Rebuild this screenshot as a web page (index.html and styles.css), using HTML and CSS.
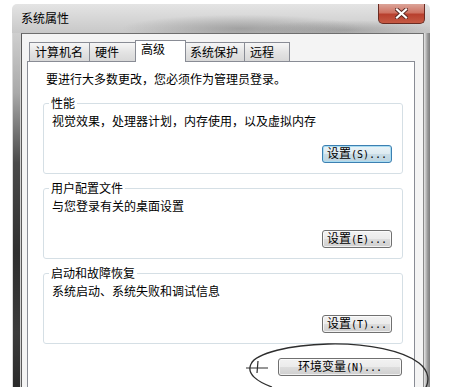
FILE: index.html
```html
<!DOCTYPE html>
<html lang="zh-CN">
<head>
  <meta charset="UTF-8" />
  <meta name="viewport" content="width=device-width, initial-scale=1.0" />
  <title>系统属性</title>
  <link rel="stylesheet" href="styles.css">
</head>
<body>

  <!-- System properties dialog -->
  <div class="window">
    <div class="titlebar">
      <span class="title">系统属性</span>
      <button class="close-btn" aria-label="关闭">
        <svg width="13" height="11" viewBox="0 0 13 11">
          <path d="M2 1.5 L11 9.5 M11 1.5 L2 9.5" stroke="#5a2a24" stroke-width="4" stroke-linecap="square" />
          <path d="M2 1.5 L11 9.5 M11 1.5 L2 9.5" stroke="#fff" stroke-width="2.2" stroke-linecap="square" />
        </svg>
      </button>
    </div>

    <div class="frame">
      <div class="frame-left"></div>

      <div class="client">
        <div class="tabs">
          <div class="tab tab-name">计算机名</div>
          <div class="tab tab-hw">硬件</div>
          <div class="tab tab-adv active">高级</div>
          <div class="tab tab-prot">系统保护</div>
          <div class="tab tab-remote">远程</div>
        </div>

        <div class="panel">
          <p class="intro">要进行大多数更改，您必须作为管理员登录。</p>

          <fieldset class="group first">
            <legend>性能</legend>
            <p class="desc">视觉效果，处理器计划，内存使用，以及虚拟内存</p>
            <div class="actions">
              <button class="btn focused">设置<span class="hotkey">(S)...</span></button>
            </div>
          </fieldset>

          <fieldset class="group">
            <legend>用户配置文件</legend>
            <p class="desc">与您登录有关的桌面设置</p>
            <div class="actions">
              <button class="btn">设置<span class="hotkey">(E)...</span></button>
            </div>
          </fieldset>

          <fieldset class="group">
            <legend>启动和故障恢复</legend>
            <p class="desc">系统启动、系统失败和调试信息</p>
            <div class="actions">
              <button class="btn">设置<span class="hotkey">(T)...</span></button>
            </div>
          </fieldset>

          <div class="actions env">
            <button class="btn wide">环境变量<span class="hotkey">(N)...</span></button>
          </div>
        </div>
      </div>

      <div class="frame-right"></div>
    </div>
  </div>

  <!-- hand-drawn circle around the env button -->
  <svg class="annotation" width="469" height="387" viewBox="0 0 469 387">
    <path d="M272 387 C258 382 246 374 251 364 C256 353 290 345 328 344 C368 343 404 351 419 363 C429 371 430 381 425 389"
          fill="none" stroke="#2e2e2e" stroke-width="1.3" />
    <path d="M246 368 L268 368 M258 361 L257 373" fill="none" stroke="#2e2e2e" stroke-width="1.2" />
  </svg>

</body>
</html>
```

FILE: styles.css
```css
body {
  margin: 0;
  height: 387px;
  background: #fff;
  font-family: 'Noto Sans CJK SC', sans-serif;
  font-size: 12px;
  line-height: 14px;
  color: #000;
  overflow: hidden;
  position: relative;
}

p {
  margin: 0;
}

.window {
  margin: 4px 0 0 12px;
  width: 418px;
  height: 383px;
  display: flex;
  flex-direction: column;
  border-radius: 5px 5px 0 0;
  overflow: hidden;
}

.titlebar {
  height: 29px;
  display: flex;
  align-items: flex-start;
  padding-left: 9px;
  background:
    radial-gradient(ellipse 120px 14px at 55% 85%, rgba(80, 80, 80, 0.35), transparent),
    radial-gradient(ellipse 90px 10px at 80% 90%, rgba(80, 80, 80, 0.3), transparent),
    linear-gradient(to bottom, #e4e4e4, #c8c8c8);
}

.title {
  margin-top: 7px;
}

.close-btn {
  margin-left: auto;
  margin-right: 5px;
  width: 47px;
  height: 20px;
  padding: 0;
  border: 1px solid #6a2b22;
  border-top: none;
  border-radius: 0 0 5px 5px;
  background: linear-gradient(to bottom, #dba499 0%, #cf7464 45%, #b8402e 55%, #c65a44 100%);
  display: flex;
  justify-content: center;
  align-items: center;
}

.frame {
  flex: 1;
  display: flex;
}

.frame-left {
  width: 7px;
  background: linear-gradient(to bottom, #cfcfcf 0, #a9a9a9 60px, #4a4a4a 130px, #2f2f2f 220px, #3b3b3b 300px, #2a2a2a 100%);
  border-left: 1px solid #d8d8d8;
  border-right: 1px solid #d0d0d0;
}

.frame-right {
  width: 6px;
  background: linear-gradient(to right, #e6e6e6, #9a9a9a 60%, #7d7d7d);
}

.client {
  flex: 1;
  display: flex;
  flex-direction: column;
  background: #f4f4f4;
  border-top: 1px solid #6e6e6e;
  border-left: 1px solid #5a5a5a;
  border-right: 1px solid #8a8a8a;
  padding: 6px 8px 0 5px;
}

/* tab strip */
.tabs {
  display: flex;
  align-items: flex-end;
  margin-left: 2px;
}

.tab {
  height: 19px;
  box-sizing: border-box;
  border: 1px solid #898c95;
  border-bottom: none;
  border-right: none;
  padding-left: 5px;
  line-height: 17px;
  background: linear-gradient(to bottom, #f6f6f6, #e4e4e4 50%, #d8d8d8);
}

.tab-name   { width: 60px; }
.tab-hw     { width: 46px; }
.tab-adv    { width: 51px; }
.tab-prot   { width: 58px; padding-left: 4px; }
.tab-remote { width: 46px; border-right: 1px solid #898c95; }

.tab-hw { border-right: none; }

.tab.active {
  height: 22px;
  margin-bottom: -1px;
  border-right: 1px solid #898c95;
  background: #fff;
  line-height: 16px;
  position: relative;
  z-index: 1;
}

.tab.active + .tab {
  border-left: none;
}

.panel {
  flex: 1;
  background: #fff;
  border: 1px solid #898c95;
  border-bottom: none;
  padding: 10px 11px 0 15px;
}

.intro {
  margin-left: 3px;
}

.group {
  margin: 7px 0 0;
  min-width: 0;
  padding: 4px 10px 10px 8px;
  border: 1px solid #d5dfe5;
  border-radius: 3px;
}

.group.first {
  margin-top: 10px;
}

.group legend {
  padding: 0 2px;
  margin-left: -3px;
}

.actions {
  display: flex;
  justify-content: flex-end;
  margin-top: 17px;
}

.actions.env {
  margin-top: 14px;
  margin-right: 1px;
}

/* Win7 style push buttons */
.btn {
  width: 70px;
  height: 18px;
  padding: 0;
  font-family: 'Noto Sans CJK SC', sans-serif;
  font-size: 12px;
  line-height: 14px;
  color: #000;
  border: 1px solid #707070;
  border-radius: 3px;
  background: linear-gradient(to bottom, #f2f2f2 0%, #ebebeb 50%, #dddddd 51%, #cfcfcf 100%);
  box-shadow: inset 0 0 0 1px rgba(255, 255, 255, 0.7);
}

.btn.focused {
  border-color: #3c7fb1;
  background: linear-gradient(to bottom, #eaf4f8 0%, #dce9f0 50%, #c9dce6 51%, #bcd3df 100%);
  box-shadow: inset 0 0 0 1px #a8dcf2;
}

.btn.wide {
  width: 124px;
}

.hotkey {
  font-family: 'DejaVu Sans Mono', monospace;
  font-size: 10px;
}

.annotation {
  position: absolute;
  left: 0;
  top: 0;
  pointer-events: none;
}
```
